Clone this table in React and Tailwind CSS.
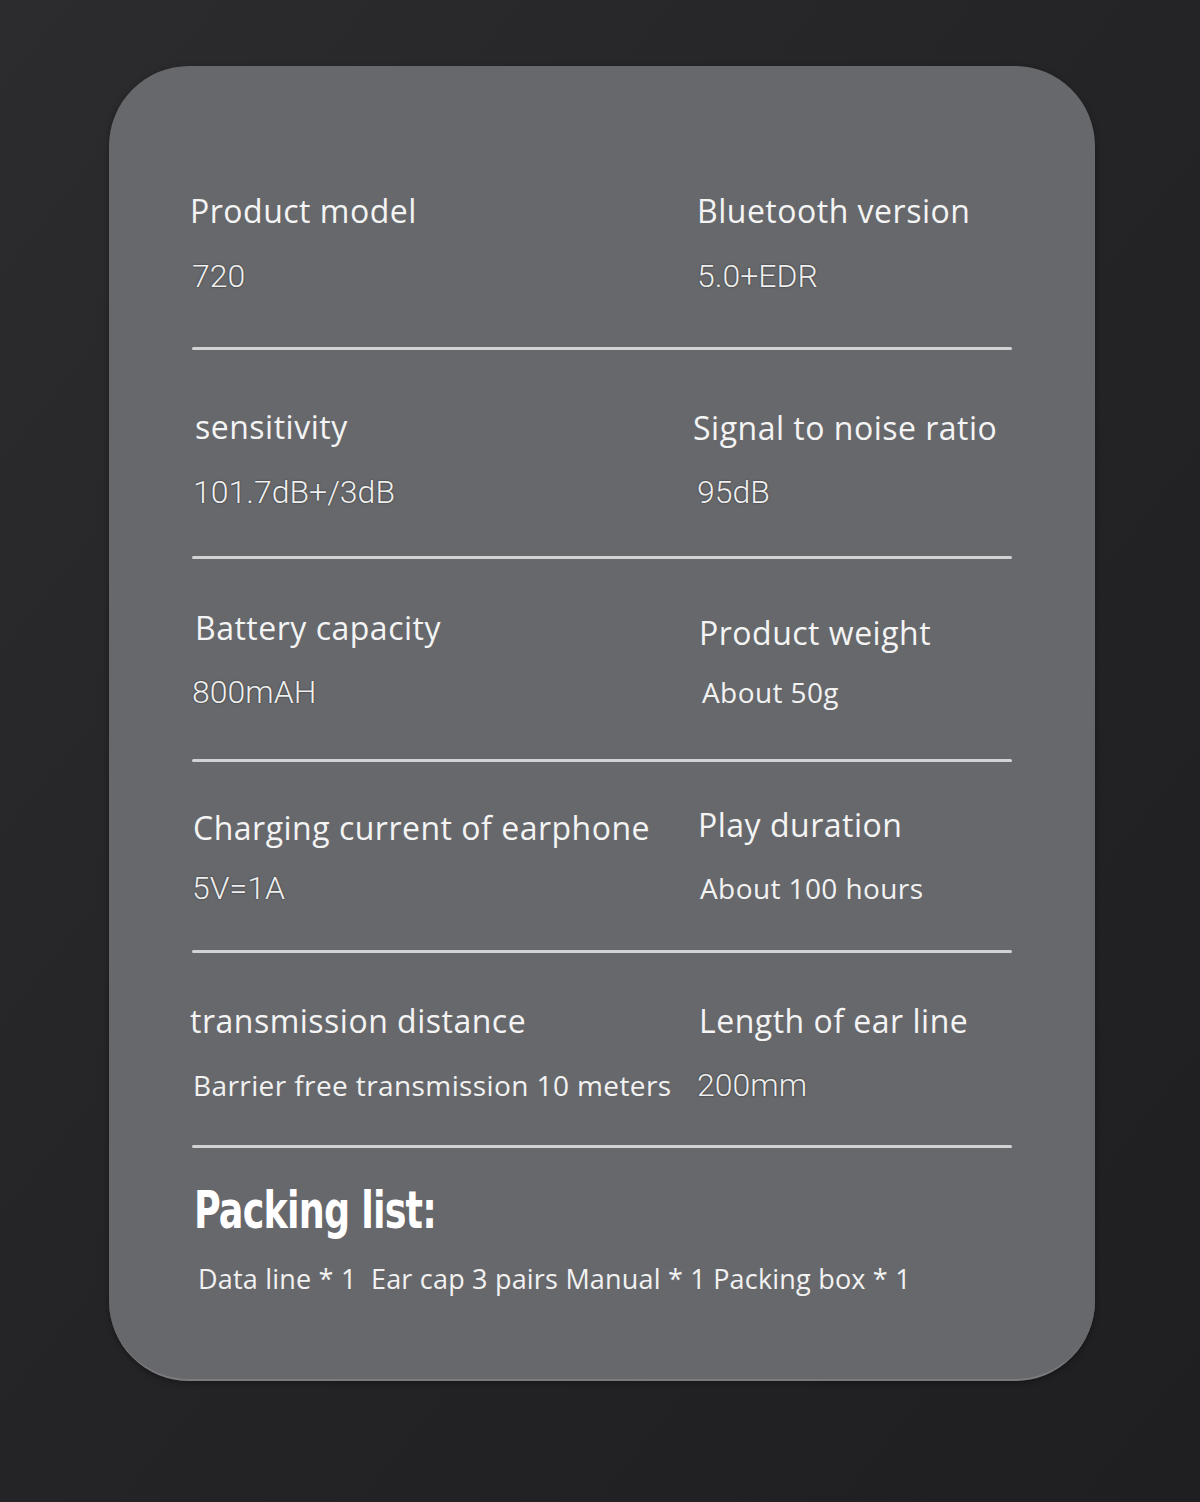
import React from "react";

const labelCls =
  "h-[36px] leading-[36px] text-[32px] font-medium tracking-[0.5px] text-[#f4f4f4] whitespace-nowrap [font-family:'Open_Sans','Noto_Sans',sans-serif]";
const valueCls =
  "h-[36px] leading-[36px] text-[32px] font-light text-[#efefef] whitespace-nowrap [font-family:Roboto,'Noto_Sans',sans-serif] [text-shadow:0_0_2px_rgba(0,0,0,0.6)]";
const smallValueCls =
  "h-[36px] leading-[36px] text-[28px] tracking-[0.4px] text-[#f2f2f2] whitespace-nowrap [font-family:'Open_Sans','Noto_Sans',sans-serif]";

function Cell({ label, value, pt, mt, lx = 0, vx = 0, small = false }) {
  return (
    <div style={{ paddingTop: pt }}>
      <div className={labelCls} style={{ marginLeft: lx }}>
        {label}
      </div>
      <div
        className={small ? smallValueCls : valueCls}
        style={{ marginTop: mt, marginLeft: vx }}
      >
        {value}
      </div>
    </div>
  );
}

function Divider() {
  return <div className="ml-[83px] w-[820px] h-[3px] bg-[#d2d2d4] rounded-full" />;
}

export default function App() {
  const rows = [
    {
      h: 281,
      left: { label: "Product model", value: "720", pt: 127, mt: 29, lx: 0, vx: 2 },
      right: { label: "Bluetooth version", value: "5.0+EDR", pt: 127, mt: 29, lx: 0, vx: 0 },
    },
    {
      h: 206,
      left: { label: "sensitivity", value: "101.7dB+/3dB", pt: 59, mt: 29, lx: 5, vx: 3 },
      right: { label: "Signal to noise ratio", value: "95dB", pt: 60, mt: 28, lx: -4, vx: 0 },
    },
    {
      h: 200,
      left: { label: "Battery capacity", value: "800mAH", pt: 51, mt: 28, lx: 5, vx: 2 },
      right: { label: "Product weight", value: "About 50g", pt: 56, mt: 23, lx: 2, vx: 5, small: true },
    },
    {
      h: 188,
      left: { label: "Charging current of earphone", value: "5V=1A", pt: 48, mt: 24, lx: 3, vx: 2 },
      right: { label: "Play duration", value: "About 100 hours", pt: 45, mt: 27, lx: 1, vx: 3, small: true },
    },
    {
      h: 192,
      left: {
        label: "transmission distance",
        value: "Barrier free transmission 10 meters",
        pt: 50,
        mt: 28,
        lx: 0,
        vx: 3,
        small: true,
      },
      right: { label: "Length of ear line", value: "200mm", pt: 50, mt: 28, lx: 2, vx: 0 },
    },
  ];

  return (
    <div className="w-[1200px] h-[1502px] overflow-hidden bg-gradient-to-br from-[#2c2c2f] via-[#242427] to-[#1f1f22] pt-[66px] pl-[109px]">
      <div className="w-[986px] h-[1315px] rounded-[80px] bg-[#67686c] border-b-2 border-[#7b7b7f] shadow-[0_2px_6px_rgba(0,0,0,0.35)] overflow-hidden">
        {rows.map((r, i) => (
          <React.Fragment key={i}>
            <div className="grid grid-cols-[507px_1fr] pl-[81px]" style={{ height: r.h }}>
              <Cell {...r.left} />
              <Cell {...r.right} />
            </div>
            <Divider />
          </React.Fragment>
        ))}
        <div className="pl-[85px] pt-[36px]">
          <div className="h-[52px] leading-[52px] text-[52px] font-bold text-white tracking-[-1px] whitespace-nowrap origin-left scale-x-[0.78] [font-family:'DejaVu_Sans_Condensed','DejaVu_Sans',sans-serif]">
            Packing list:
          </div>
          <div className="mt-[27px] ml-[4px] h-[32px] leading-[32px] text-[27px] tracking-[0.2px] text-[#f2f2f2] whitespace-pre [font-family:'Open_Sans','Noto_Sans',sans-serif]">
            {"Data line * 1  Ear cap 3 pairs Manual * 1 Packing box * 1"}
          </div>
        </div>
      </div>
    </div>
  );
}
